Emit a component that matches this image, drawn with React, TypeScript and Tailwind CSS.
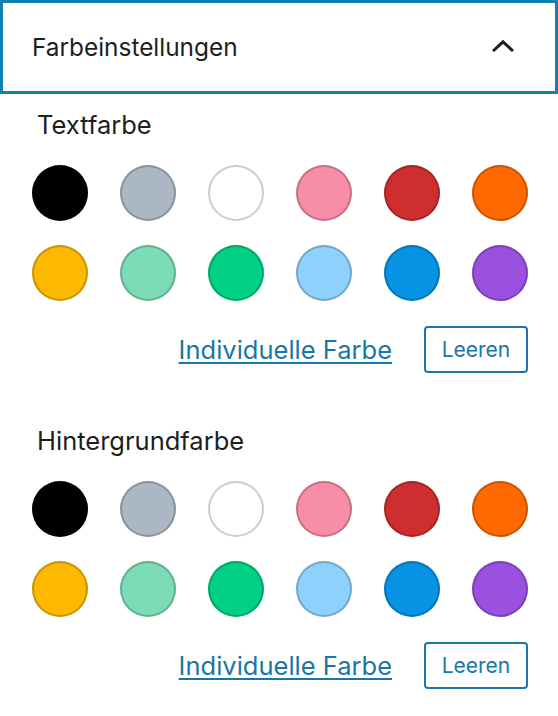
import React from "react";

type Swatch = {
    name: string;
    bg: string;
};

const palette: Swatch[] = [
    {name: "Schwarz", bg: "bg-[#000000]"},
    {name: "Cyan-bläuliches Grau", bg: "bg-[#abb8c3]"},
    {name: "Weiß", bg: "bg-[#ffffff] shadow-[inset_0_0_0_2px_#d0d0d0]"},
    {name: "Blasses Rosa", bg: "bg-[#f78da7]"},
    {name: "Lebhaftes Rot", bg: "bg-[#cf2e2e]"},
    {name: "Leuchtendes Orange", bg: "bg-[#ff6900]"},
    {name: "Leuchtendes Bernstein", bg: "bg-[#fcb900]"},
    {name: "Helles Grün-Cyan", bg: "bg-[#7bdcb5]"},
    {name: "Lebhaftes Grün-Cyan", bg: "bg-[#00d084]"},
    {name: "Blasses Cyanblau", bg: "bg-[#8ed1fc]"},
    {name: "Lebhaftes Cyanblau", bg: "bg-[#0693e3]"},
    {name: "Lebhaftes Lila", bg: "bg-[#9b51e0]"},
];

const ColorSection = ({label}: {label: string}) => (
    <div className="flex flex-col">
        <p className="ml-[5px] text-[25.5px] leading-[32px] text-[#1e1e1e]">{label}</p>
        <div className="mt-[24px] grid grid-cols-[repeat(6,56px)] gap-x-[32px] gap-y-[24px]">
            {palette.map((c) => (
                <button
                    key={c.name}
                    aria-label={c.name}
                    className={`h-[56px] w-[56px] rounded-full shadow-[inset_0_0_0_2px_rgba(0,0,0,0.2)] ${c.bg}`}
                />
            ))}
        </div>
        <div className="mt-[25px] flex items-center justify-end gap-[32px]">
            <a href="#" className="text-[25.5px] leading-[32px] text-[#1877a7] underline underline-offset-[3px] decoration-2">
                Individuelle Farbe
            </a>
            <button
                className="h-[47px] w-[104px] rounded-[4px] border-2 border-[#1877a7] text-[21px] text-[#1877a7]">
                Leeren
            </button>
        </div>
    </div>
);

export default function App() {
    return (
        <div className="h-[716px] w-[558px] bg-white font-['Inter',sans-serif]">
            <button
                className="flex h-[94px] w-full items-center justify-between border-[3px] border-[#137fae] pl-[29px] pr-[41px]">
                <span className="text-[24.4px] text-[#1e1e1e]">Farbeinstellungen</span>
                <svg width="22" height="12" viewBox="0 0 22 12" fill="none" className="mb-[2px]">
                    <path d="M1 11 L11 1.8 L21 11" stroke="#1e1e1e" strokeWidth="3"/>
                </svg>
            </button>
            <div className="flex flex-col gap-[52px] pl-[32px] pr-[30px] pt-[15px]">
                <ColorSection label="Textfarbe"/>
                <ColorSection label="Hintergrundfarbe"/>
            </div>
        </div>
    );
}
